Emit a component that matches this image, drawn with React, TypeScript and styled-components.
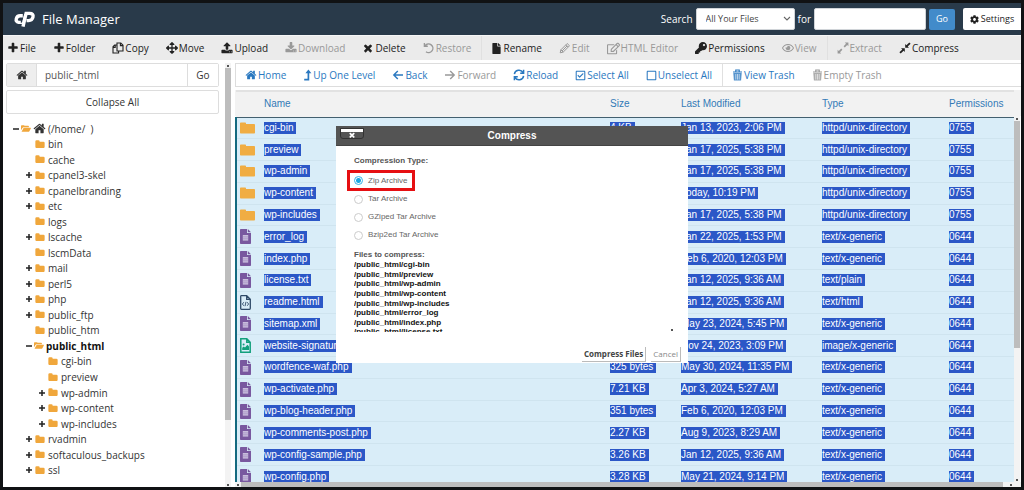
import React from "react";
import styled, { createGlobalStyle, css } from "styled-components";
import {
  FaArrowsAlt,
  FaCog,
  FaFile,
  FaKey,
  FaRegCheckSquare,
  FaRegEdit,
  FaRegEye,
  FaRegSquare,
} from "react-icons/fa";

const GlobalStyle = createGlobalStyle`
  * { box-sizing: border-box; }
  body { margin: 0; background: #101214; }
  button, input, select { font: inherit; color: inherit; margin: 0; }
`;

/* ---------- icons ---------- */

const Glyph = ({ d, size = 12 }: { d: string; size?: number }) => (
  <svg width={size} height={size} viewBox="0 0 1792 1792" fill="currentColor" aria-hidden="true">
    <path d={d} />
  </svg>
);

const PLUS =
  "M1600 736v192q0 40-28 68t-68 28h-416v416q0 40-28 68t-68 28h-192q-40 0-68-28t-28-68v-416h-416q-40 0-68-28t-28-68v-192q0-40 28-68t68-28h416v-416q0-40 28-68t68-28h192q40 0 68 28t28 68v416h416q40 0 68 28t28 68z";
const TIMES =
  "M1490 1322q0 40-28 68l-136 136q-28 28-68 28t-68-28l-294-294-294 294q-28 28-68 28t-68-28l-136-136q-28-28-28-68t28-68l294-294-294-294q-28-28-28-68t28-68l136-136q28-28 68-28t68 28l294 294 294-294q28-28 68-28t68 28l136 136q28 28 28 68t-28 68l-294 294 294 294q28 28 28 68z";
const HOME =
  "M1472 992v480q0 26-19 45t-45 19h-384v-384h-256v384h-384q-26 0-45-19t-19-45v-480q0-1 .5-3t.5-3l575-474 575 474q1 2 1 6zm223-69l-62 74q-8 9-21 11h-3q-13 0-21-7l-692-577-692 577q-12 8-24 7-13-2-21-11l-62-74q-8-10-7-23.5t11-21.5l719-599q32-26 76-26t76 26l244 204v-195q0-14 9-23t23-9h192q14 0 23 9t9 23v408l219 182q10 8 11 21.5t-7 23.5z";
const UPLOAD =
  "M1344 1472q0-26-19-45t-45-19-45 19-19 45 19 45 45 19 45-19 19-45zm256 0q0-26-19-45t-45-19-45 19-19 45 19 45 45 19 45-19 19-45zm128-224v320q0 40-28 68t-68 28h-1472q-40 0-68-28t-28-68v-320q0-40 28-68t68-28h427q21 56 70.5 92t110.5 36h256q61 0 110.5-36t70.5-92h427q40 0 68 28t28 68zm-325-648q-17 40-59 40h-256v448q0 26-19 45t-45 19h-256q-26 0-45-19t-19-45v-448h-256q-42 0-59-40-17-39 14-69l448-448q18-19 45-19t45 19l448 448q31 30 14 69z";
const DOWNLOAD =
  "M1344 1344q0-26-19-45t-45-19-45 19-19 45 19 45 45 19 45-19 19-45zm256 0q0-26-19-45t-45-19-45 19-19 45 19 45 45 19 45-19 19-45zm128-224v320q0 40-28 68t-68 28h-1472q-40 0-68-28t-28-68v-320q0-40 28-68t68-28h465l135 136q58 56 136 56t136-56l136-136h464q40 0 68 28t28 68zm-325-569q17 41-14 70l-448 448q-18 19-45 19t-45-19l-448-448q-31-29-14-70 17-39 59-39h256v-448q0-26 19-45t45-19h256q26 0 45 19t19 45v448h256q42 0 59 39z";
const FOLDER =
  "M1728 608v704q0 92-66 158t-158 66h-1216q-92 0-158-66t-66-158v-960q0-92 66-158t158-66h320q92 0 158 66t66 158v32h672q92 0 158 66t66 158z";

const Line = ({ children, w = 1.4 }: { children: React.ReactNode; w?: number }) => (
  <svg width="12" height="12" viewBox="0 0 12 12" fill="none" stroke="currentColor" strokeWidth={w} aria-hidden="true">
    {children}
  </svg>
);

const CopyIcon = () => (
  <Line w={1.1}>
    <path d="M5 1h3.8L11 3.2V9H5zM8.4 1v2.6H11M5 3H2.6L1 4.8V11h5.6V9.2M1 5.4h2.2V3" />
  </Line>
);
const UndoIcon = () => (
  <Line w={1.4}>
    <path d="M2.2 3.6A4.3 4.3 0 1 1 3 9.7M1.4 1v3.2h3.4" />
  </Line>
);
const PencilIcon = () => (
  <Line w={1}>
    <path d="M1.2 10.8l.7-3L8.2 1.5l2.3 2.3-6.3 6.3zM7 2.8L9.2 5M3 9l5-5M1.9 7.8l2.3 2.3" />
  </Line>
);
const ExtractIcon = () => (
  <svg width="12" height="12" viewBox="0 0 12 12" fill="currentColor" aria-hidden="true">
    <path d="M11.4.6v3.6l-1.2-1.2-2.4 2.4-1.2-1.2 2.4-2.4L7.8.6zM.6 11.4V7.8l1.2 1.2 2.4-2.4 1.2 1.2L3 10.2l1.2 1.2z" />
  </svg>
);
const CompressIcon = () => (
  <svg width="12" height="12" viewBox="0 0 12 12" fill="currentColor" aria-hidden="true">
    <path d="M6.2 2v3.8H10L8.7 4.6 11.6 1.7 10.3.4 7.4 3.3zM5.8 10V6.2H2l1.3 1.2L.4 10.3l1.3 1.3 2.9-2.9z" />
  </svg>
);
const UpLevelIcon = () => (
  <svg width="9" height="12" viewBox="0 0 9 12" aria-hidden="true">
    <path d="M5.4 3v7.6H1.2" fill="none" stroke="currentColor" strokeWidth="1.7" />
    <path d="M5.4.4l3 3.8h-6z" fill="currentColor" />
  </svg>
);
const ArrowIcon = ({ right }: { right?: boolean }) => (
  <Line w={1.4}>
    <path d={right ? "M1 6h9M6.2 2l4 4-4 4" : "M11 6H2M5.8 2l-4 4 4 4"} />
  </Line>
);
const ReloadIcon = () => (
  <Line w={1.5}>
    <path d="M1.4 5.2A4.6 4.6 0 0 1 10 3.6M10.6 6.8A4.6 4.6 0 0 1 2 8.4M10.6.8v3.4H7.2M1.4 11.2V7.8h3.4" />
  </Line>
);
const TrashIcon = () => (
  <svg width="11" height="12" viewBox="0 0 11 12" aria-hidden="true">
    <path d="M1 3h9M3.8 2.4V1h3.4v1.4" fill="none" stroke="currentColor" strokeWidth="1.2" />
    <path d="M1.3 4h8.4l-.6 7.6H1.9z" fill="currentColor" opacity=".8" />
    <path d="M3.8 5v5.6M5.5 5v5.6M7.2 5v5.6" stroke="#fff" strokeWidth=".6" />
  </svg>
);
const OpenFolderIcon = () => (
  <svg width="11" height="9" viewBox="0 0 11 9" fill="currentColor" aria-hidden="true">
    <path d="M0 6.4V1.6Q0 .8.8.8h2.4q.7 0 .7.8h4q.8 0 .8.8v.7H3.1Q2.3 3.1 1.8 3.8z" />
    <path d="M.6 8.2L2.5 4.4q.3-.6 1-.6h7q.6 0 .3.6L9.2 7.6q-.4.6-1 .6z" />
  </svg>
);
const BigFolderIcon = () => (
  <svg width="15" height="12" viewBox="0 0 15 12" fill="#f0ad43" aria-hidden="true">
    <path d="M0 1.2Q0 .4.8.4h4.4q.8 0 .8.8v.9h8.2q.8 0 .8.8v7.9q0 .8-.8.8H.8q-.8 0-.8-.8z" />
  </svg>
);
const TextFileIcon = () => (
  <svg width="11" height="15" viewBox="0 0 11 15" aria-hidden="true">
    <path d="M.8 0H7v4h4v10.2q0 .8-.8.8H.8q-.8 0-.8-.8V.8Q0 0 .8 0zM7.8 0L11 3.2H7.8z" fill="#79589f" />
    <path d="M2.8 6h5.4v5.6H2.8z" fill="#c9bedd" />
    <path d="M2.8 7.9h5.4M2.8 9.8h5.4" stroke="#9a83b8" strokeWidth=".6" />
  </svg>
);
const HtmlFileIcon = () => (
  <svg width="11" height="15" viewBox="0 0 11 15" fill="none" stroke="#2f4a68" strokeWidth="1.3" aria-hidden="true">
    <path d="M1.2.7h5.5l3.6 3.6v9q0 1-.8 1H1.5q-.8 0-.8-1V1.5q0-.8.5-.8zM6.7.7v3.6h3.6" />
    <path d="M3.8 7.2L2.4 9l1.4 1.8M7.2 7.2L8.6 9l-1.4 1.8M6 6.8l-1 4.4" strokeWidth=".9" />
  </svg>
);
const ImageFileIcon = () => (
  <svg width="11" height="15" viewBox="0 0 11 15" aria-hidden="true">
    <path d="M.8.8h6l3.4 3.4v10H.8zM6.8.8v3.4h3.4" fill="none" stroke="#12a07c" strokeWidth="1.5" />
    <path d="M2.2 12V9.8l1.6-1.4 1.2 1.2 2.4-2.8 1.6 1.6V12z" fill="#12a07c" />
    <circle cx="3.6" cy="6.4" r="1" fill="#12a07c" />
  </svg>
);
const Logo = () => (
  <svg width="22" height="16" viewBox="0 0 22 16" fill="none" stroke="#fff" strokeWidth="3.4" aria-hidden="true">
    <path d="M8.8 4.8H6.2Q3 4.8 2.3 7.8T4.6 11.4H6.8" />
    <path d="M9 15.6L12.1 2.4h3.5q4.2 0 3.4 3.6-.8 3.6-4.4 3.6h-2" />
    <path d="M6 12.4h1.2Q8.6 12.4 9 11L11 3" strokeWidth="1.4" />
  </svg>
);

/* ---------- page ---------- */

const Page = styled.div`
  display: flex;
  flex-direction: column;
  height: 100vh;
  overflow: hidden;
  border: 3px solid #101214;
  background: #fff;
  color: #333;
  font: 10px/14px "Open Sans", "Noto Sans", sans-serif;
`;

const Header = styled.header`
  display: flex;
  align-items: center;
  flex: none;
  height: 32px;
  padding-left: 11px;
  background: #293a4a;
  color: #fff;
`;

const Title = styled.h1`
  flex: 1;
  margin: 0 0 0 6px;
  font-size: 13px;
  font-weight: 400;
  line-height: 18px;
`;

const SearchForm = styled.form`
  display: flex;
  align-items: center;
  gap: 3px;
`;

const SelectWrap = styled.span`
  position: relative;
  display: flex;
  color: #444;

  svg {
    position: absolute;
    right: 4px;
    top: 8px;
    pointer-events: none;
  }
`;

const headerField = css`
  height: 22px;
  border: 1px solid #d0d4d8;
  border-radius: 2px;
  background: #fff;
`;

const ScopeSelect = styled.select`
  ${headerField}
  width: 99px;
  padding: 0 9px;
  appearance: none;
  font-size: 9px;
`;

const SearchInput = styled.input`
  ${headerField}
  width: 112px;
  padding: 0 6px;
  color: #333;
`;

const GoButton = styled.button`
  width: 26px;
  height: 21px;
  padding: 0;
  border: 0;
  border-radius: 2px;
  background: #428bca;
  color: #fff;
  font-size: 9px;
`;

const SettingsButton = styled.button`
  display: flex;
  align-items: center;
  justify-content: center;
  gap: 2px;
  width: 58px;
  height: 22px;
  margin-left: 8px;
  padding: 0;
  border: 0;
  border-radius: 2px 0 0 2px;
  background: #fff;
  color: #222;
  font-size: 9px;
`;

const ToolGroup = styled.div`
  display: flex;

  & + & {
    margin-left: 2px;
    border-left: 1px solid #e0e0e0;
  }
`;

const ToolButton = styled.button<{ $tone?: "link" | "muted" }>`
  display: flex;
  align-items: center;
  gap: 1px;
  padding: 0 8px 0 9px;
  border: 0;
  background: none;
  white-space: nowrap;
  color: ${(p) => (p.$tone === "link" ? "#2a78c0" : p.$tone === "muted" ? "#999" : "#222")};

  svg { flex: none; }
`;

const Toolbar = styled.nav`
  display: flex;
  flex: none;
  height: 25px;
  border-top: 1px solid #f6f6f6;
  background: #ebebeb;

  ${ToolGroup}:first-child ${ToolButton}:first-child {
    padding-left: 4px;
  }
`;

const Main = styled.main`
  display: flex;
  flex: 1;
  min-height: 0;
  padding-top: 3px;
`;

const Sidebar = styled.aside`
  display: flex;
  flex-direction: column;
  width: 222px;
  padding: 0 6px 0 3px;
`;

const PathForm = styled.form`
  display: flex;
  flex: none;
  height: 24px;
  border: 1px solid #ddd;
  border-radius: 2px;
`;

const HomeButton = styled.button`
  display: flex;
  align-items: center;
  justify-content: center;
  width: 29px;
  padding: 0;
  border: 0;
  background: #eee;
`;

const PathInput = styled.input`
  flex: 1;
  min-width: 0;
  padding: 0 8px;
  border: 1px solid #ddd;
  border-width: 0 1px;
  background: #fff;
  color: #555;
`;

const PathGo = styled.button`
  width: 30px;
  padding: 0;
  border: 0;
  background: #fff;
`;

const CollapseButton = styled.button`
  flex: none;
  height: 24px;
  margin-top: 3px;
  border: 1px solid #ddd;
  border-radius: 2px;
  background: #fff;
`;

const Tree = styled.ul`
  display: flex;
  flex: 1;
  flex-direction: column;
  margin: 7px 0 9px;
  padding: 0;
  list-style: none;
`;

const TreeRow = styled.li<{ $level: number; $current?: boolean }>`
  display: flex;
  flex: 1;
  align-items: center;
  gap: ${(p) => (p.$level === 0 || p.$current ? 2 : 3)}px;
  padding-left: ${(p) => 7 + p.$level * 13}px;
  white-space: pre;
  font-weight: ${(p) => (p.$current ? 700 : 400)};
  color: ${(p) => (p.$current ? "#111" : "#333")};
`;

const TreeToggle = styled.span`
  display: flex;
  width: 6px;
  color: #222;
`;

const TreeFolder = styled.span`
  display: flex;
  width: 10px;
  color: #f0a73c;
`;

const ScrollTrack = styled.div<{ $horizontal?: boolean }>`
  display: flex;
  flex: none;
  flex-direction: ${(p) => (p.$horizontal ? "row" : "column")};
  justify-content: space-between;
  align-items: center;
  ${(p) => (p.$horizontal ? "height: 5px;" : "width: 6px;")}
  background: #f3f3f3;
`;

const Thumb = styled.div<{ $share: number }>`
  flex: 0 0 ${(p) => p.$share}%;
  margin-bottom: auto;
  width: 100%;
  background: #bdbdbd;
`;

const HThumb = styled.div`
  flex: 1;
  align-self: stretch;
  margin-right: 5px;
  background: #bdbdbd;
`;

const TrackArrow = styled.span`
  flex: none;
  width: 6px;
  height: 5px;
  background: linear-gradient(#555, #555) center / 2px 2px no-repeat;
`;

const TrackCorner = styled.span`
  width: 7px;
`;

const Content = styled.section`
  display: flex;
  flex: 1;
  flex-direction: column;
  min-width: 0;
  margin-left: 4px;
`;

const ActionBar = styled.nav`
  display: flex;
  flex: none;
  height: 24px;
  border: 1px solid #ddd;
  border-right: 0;
`;

const Listing = styled.div`
  display: flex;
  flex: 1;
  min-height: 0;
  margin-top: 3px;
  overflow: hidden;
  background: linear-gradient(#f2f2f2, #f2f2f2) top / 100% 26px no-repeat;
`;

const ListingScroll = styled.div`
  display: flex;
  flex: none;
  width: 7px;
  margin-top: 26px;
`;

const FileTable = styled.table`
  flex: 1;
  height: calc(100% + 6px);
  border-collapse: collapse;
  table-layout: fixed;
  font: 10px/12px "Liberation Sans", Arial, sans-serif;

  th {
    height: 26px;
    padding: 0;
    border-top: 2px solid #e2e2e2;
    border-bottom: 1px solid #43606f;
    background: #f2f2f2;
    color: #337ab7;
    font-weight: 400;
    text-align: left;
  }

  tbody {
    border-left: 2px solid #146a80;
  }

  td {
    height: 20px;
    padding: 0;
    border-bottom: 1px solid #cfe4ef;
    background: #d9edf8;
    white-space: nowrap;
  }

  td svg {
    display: block;
    margin-left: 3px;
  }
`;

const Col = styled.col<{ $w?: number }>`
  ${(p) => (p.$w ? `width: ${p.$w}px;` : "")}
`;

const Selected = styled.span`
  display: inline-block;
  padding-right: 3px;
  background: #2b57c7;
  color: #fff;
`;

/* ---------- dialog ---------- */

const Dialog = styled.div`
  position: fixed;
  top: 126px;
  left: 50%;
  display: flex;
  flex-direction: column;
  width: 352px;
  transform: translateX(-50%);
  background: #fff;
  color: #666;
  font: 8px/10px "Liberation Sans", Arial, sans-serif;
`;

const DialogHeader = styled.div`
  display: grid;
  grid-template-columns: 24px 1fr 24px;
  align-items: start;
  height: 20px;
  padding: 2px 4px;
  border-bottom: 1px solid #444;
  background: #545454;
`;

const CloseButton = styled.button`
  display: flex;
  align-items: center;
  justify-content: center;
  height: 11px;
  padding: 2px 0 0;
  border: 1px solid #333;
  border-radius: 0 0 3px 3px;
  background: linear-gradient(#fff 3px, #555 3px);
  color: #fff;
`;

const DialogTitle = styled.h2`
  margin: 0;
  color: #fff;
  font-size: 10px;
  line-height: 16px;
  text-align: center;
`;

const DialogBody = styled.form`
  padding: 10px 18px 0;
`;

const Options = styled.fieldset`
  margin: 0;
  padding: 0;
  border: 0;
`;

const Legend = styled.legend`
  padding: 0;
  color: #555;
  font-weight: 700;
`;

const Option = styled.label<{ $marked?: boolean }>`
  display: flex;
  align-items: center;
  gap: 5px;
  width: max-content;
  height: ${(p) => (p.$marked ? 21 : 18)}px;
  margin: ${(p) => (p.$marked ? "4px 0 -1px -7px" : "0")};
  padding: ${(p) => (p.$marked ? "0 4px" : "0")};
  border: ${(p) => (p.$marked ? "3px solid #e60f12" : "0")};
`;

const Radio = styled.input`
  width: 9px;
  height: 9px;
  appearance: none;
  border: 1px solid #ccc;
  border-radius: 50%;
  background: #fff;

  &:checked {
    border-color: #35b4e8;
    background: radial-gradient(#1ba7e2 2px, #fff 3px);
  }
`;

const FilesTitle = styled.h3`
  margin: 6px 0 0;
  color: #555;
  font-size: 8px;
  line-height: 10px;
`;

const FileListBox = styled.div`
  display: flex;
  align-items: flex-end;
  height: 72px;
  margin-right: -5px;
  overflow: hidden;
`;

const FileList = styled.ul`
  display: grid;
  grid-auto-rows: 1fr;
  flex: 1;
  align-self: flex-start;
  height: 77px;
  margin: 0;
  padding: 0;
  list-style: none;
  color: #111;
  font-weight: 700;
  line-height: 9px;
`;

const DialogActions = styled.div`
  display: flex;
  justify-content: flex-end;
  gap: 5px;
  margin: 15px -11px 1px 0;
`;

const DialogButton = styled.button<{ $primary?: boolean }>`
  height: 15px;
  padding: 0 2px;
  border: solid #bbb;
  border-width: 0 1px 1px 0;
  background: #fff;
  color: ${(p) => (p.$primary ? "#444" : "#888")};
  font: ${(p) => (p.$primary ? 700 : 400)} 8px/12px "Open Sans", sans-serif;
`;

/* ---------- data ---------- */

type Tool = [label: string, icon: React.ReactNode, tone?: "link" | "muted"];

const tools: Tool[][] = [
  [
    ["File", <Glyph d={PLUS} />],
    ["Folder", <Glyph d={PLUS} />],
    ["Copy", <CopyIcon />],
    ["Move", <FaArrowsAlt size={12} />],
    ["Upload", <Glyph d={UPLOAD} />],
    ["Download", <Glyph d={DOWNLOAD} />, "muted"],
    ["Delete", <Glyph d={TIMES} />],
    ["Restore", <UndoIcon />, "muted"],
  ],
  [
    ["Rename", <FaFile size={11} />],
    ["Edit", <PencilIcon />, "muted"],
    ["HTML Editor", <FaRegEdit size={13} />, "muted"],
    ["Permissions", <FaKey size={12} />],
    ["View", <FaRegEye size={12} />, "muted"],
  ],
  [
    ["Extract", <ExtractIcon />, "muted"],
    ["Compress", <CompressIcon />],
  ],
];

const actions: Tool[][] = [
  [
    ["Home", <Glyph d={HOME} />, "link"],
    ["Up One Level", <UpLevelIcon />, "link"],
    ["Back", <ArrowIcon />, "link"],
    ["Forward", <ArrowIcon right />, "muted"],
    ["Reload", <ReloadIcon />, "link"],
    ["Select All", <FaRegCheckSquare size={11} />, "link"],
    ["Unselect All", <FaRegSquare size={11} />, "link"],
  ],
  [
    ["View Trash", <TrashIcon />, "link"],
    ["Empty Trash", <TrashIcon />, "muted"],
  ],
];

type Node = [name: string, level: number, toggle?: "+" | "-"];

const tree: Node[] = [
  ["(/home/  )", 0, "-"],
  ["bin", 1],
  ["cache", 1],
  ["cpanel3-skel", 1, "+"],
  ["cpanelbranding", 1, "+"],
  ["etc", 1, "+"],
  ["logs", 1],
  ["lscache", 1, "+"],
  ["lscmData", 1],
  ["mail", 1, "+"],
  ["perl5", 1, "+"],
  ["php", 1, "+"],
  ["public_ftp", 1, "+"],
  ["public_htm", 1],
  ["public_html", 1, "-"],
  ["cgi-bin", 2],
  ["preview", 2],
  ["wp-admin", 2, "+"],
  ["wp-content", 2, "+"],
  ["wp-includes", 2, "+"],
  ["rvadmin", 1, "+"],
  ["softaculous_backups", 1, "+"],
  ["ssl", 1, "+"],
];

const files: string[][] = [
  ["cgi-bin", "4 KB", "Jan 13, 2023, 2:06 PM", "httpd/unix-directory", "0755"],
  ["preview", "4 KB", "Jan 17, 2025, 5:38 PM", "httpd/unix-directory", "0755"],
  ["wp-admin", "4 KB", "Jan 17, 2025, 5:38 PM", "httpd/unix-directory", "0755"],
  ["wp-content", "4 KB", "Today, 10:19 PM", "httpd/unix-directory", "0755"],
  ["wp-includes", "4 KB", "Jan 17, 2025, 5:38 PM", "httpd/unix-directory", "0755"],
  ["error_log", "4 KB", "Jan 22, 2025, 1:53 PM", "text/x-generic", "0644"],
  ["index.php", "4 KB", "Feb 6, 2020, 12:03 PM", "text/x-generic", "0644"],
  ["license.txt", "4 KB", "Jan 12, 2025, 9:36 AM", "text/plain", "0644"],
  ["readme.html", "4 KB", "Jan 12, 2025, 9:36 AM", "text/html", "0644"],
  ["sitemap.xml", "4 KB", "May 23, 2024, 5:45 PM", "text/x-generic", "0644"],
  ["website-signature", "4 KB", "Nov 24, 2023, 3:09 PM", "image/x-generic", "0644"],
  ["wordfence-waf.php", "325 bytes", "May 30, 2024, 11:35 PM", "text/x-generic", "0644"],
  ["wp-activate.php", "7.21 KB", "Apr 3, 2024, 5:27 AM", "text/x-generic", "0644"],
  ["wp-blog-header.php", "351 bytes", "Feb 6, 2020, 12:03 PM", "text/x-generic", "0644"],
  ["wp-comments-post.php", "2.27 KB", "Aug 9, 2023, 8:29 AM", "text/x-generic", "0644"],
  ["wp-config-sample.php", "3.26 KB", "Jan 12, 2025, 9:36 AM", "text/x-generic", "0644"],
  ["wp-config.php", "3.28 KB", "May 21, 2024, 9:14 PM", "text/x-generic", "0644"],
];

const archiveTypes = ["Zip Archive", "Tar Archive", "GZiped Tar Archive", "Bzip2ed Tar Archive"];

const iconFor = (type: string) => {
  if (type.startsWith("httpd")) return <BigFolderIcon />;
  if (type === "text/html") return <HtmlFileIcon />;
  if (type.startsWith("image")) return <ImageFileIcon />;
  return <TextFileIcon />;
};

const ToolGroups = ({ groups }: { groups: Tool[][] }) => (
  <>
    {groups.map((group, i) => (
      <ToolGroup key={i}>
        {group.map(([label, icon, tone]) => (
          <ToolButton key={label} type="button" $tone={tone}>
            {icon}
            {label}
          </ToolButton>
        ))}
      </ToolGroup>
    ))}
  </>
);

const Toggle = ({ kind }: { kind?: "+" | "-" }) => (
  <TreeToggle>
    {kind && (
      <svg width="6" height="6" viewBox="0 0 6 6" stroke="currentColor" strokeWidth="1.5" aria-hidden="true">
        <path d={kind === "+" ? "M0 3h6M3 0v6" : "M0 3h6"} />
      </svg>
    )}
  </TreeToggle>
);

export default function App() {
  return (
    <>
      <GlobalStyle />
      <Page>
        <Header>
          <Logo />
          <Title>File Manager</Title>
          <SearchForm onSubmit={(e) => e.preventDefault()}>
            <label htmlFor="scope">Search</label>
            <SelectWrap>
              <ScopeSelect id="scope">
                <option>All Your Files</option>
              </ScopeSelect>
              <svg width="8" height="6" viewBox="0 0 8 6" fill="none" stroke="#666" strokeWidth="1.1" aria-hidden="true">
                <path d="M1 1l3 3 3-3" />
              </svg>
            </SelectWrap>
            <label htmlFor="term">for</label>
            <SearchInput id="term" type="text" />
            <GoButton type="submit">Go</GoButton>
          </SearchForm>
          <SettingsButton type="button">
            <FaCog size={9} />
            Settings
          </SettingsButton>
        </Header>

        <Toolbar>
          <ToolGroups groups={tools} />
        </Toolbar>

        <Main>
          <Sidebar>
            <PathForm onSubmit={(e) => e.preventDefault()}>
              <HomeButton type="button" aria-label="Home directory">
                <Glyph d={HOME} />
              </HomeButton>
              <PathInput aria-label="Directory" defaultValue="public_html" />
              <PathGo type="submit">Go</PathGo>
            </PathForm>
            <CollapseButton type="button">Collapse All</CollapseButton>
            <Tree>
              {tree.map(([name, level, toggle]) => (
                <TreeRow key={name} $level={level} $current={name === "public_html"}>
                  <Toggle kind={toggle} />
                  <TreeFolder>{toggle === "-" ? <OpenFolderIcon /> : <Glyph d={FOLDER} size={11} />}</TreeFolder>
                  {level === 0 && <Glyph d={HOME} size={13} />}
                  <span>{name}</span>
                </TreeRow>
              ))}
            </Tree>
          </Sidebar>
          <ScrollTrack>
            <TrackArrow />
            <Thumb $share={83} />
            <TrackArrow />
          </ScrollTrack>

          <Content>
            <ActionBar>
              <ToolGroups groups={actions} />
            </ActionBar>
            <Listing>
              <FileTable>
                <colgroup>
                  <Col $w={28} />
                  <Col />
                  <Col $w={71} />
                  <Col $w={141} />
                  <Col $w={127} />
                  <Col $w={65} />
                </colgroup>
                <thead>
                  <tr>
                    <th aria-label="Kind" />
                    <th>Name</th>
                    <th>Size</th>
                    <th>Last Modified</th>
                    <th>Type</th>
                    <th>Permissions</th>
                  </tr>
                </thead>
                <tbody>
                  {files.map((row) => (
                    <tr key={row[0]}>
                      <td>{iconFor(row[3])}</td>
                      {row.map((cell, i) => (
                        <td key={i}>
                          <Selected>{cell}</Selected>
                        </td>
                      ))}
                    </tr>
                  ))}
                </tbody>
              </FileTable>
              <ListingScroll>
                <ScrollTrack>
                  <TrackArrow />
                  <Thumb $share={62} />
                  <TrackArrow />
                </ScrollTrack>
              </ListingScroll>
            </Listing>
            <ScrollTrack $horizontal>
              <TrackArrow />
              <HThumb />
              <TrackArrow />
              <TrackCorner />
            </ScrollTrack>
          </Content>
        </Main>
      </Page>

      <Dialog role="dialog" aria-labelledby="dialog-title">
        <DialogHeader>
          <CloseButton type="button" aria-label="Close">
            <Glyph d={TIMES} size={8} />
          </CloseButton>
          <DialogTitle id="dialog-title">Compress</DialogTitle>
        </DialogHeader>
        <DialogBody onSubmit={(e) => e.preventDefault()}>
          <Options>
            <Legend>Compression Type:</Legend>
            {archiveTypes.map((type, i) => (
              <Option key={type} $marked={i === 0}>
                <Radio type="radio" name="archive" defaultChecked={i === 0} />
                {type}
              </Option>
            ))}
          </Options>
          <FilesTitle>Files to compress:</FilesTitle>
          <FileListBox>
            <FileList>
              {files.slice(0, 8).map(([name]) => (
                <li key={name}>/public_html/{name}</li>
              ))}
            </FileList>
            <TrackArrow />
          </FileListBox>
          <DialogActions>
            <DialogButton type="submit" $primary>
              Compress Files
            </DialogButton>
            <DialogButton type="button">Cancel</DialogButton>
          </DialogActions>
        </DialogBody>
      </Dialog>
    </>
  );
}
